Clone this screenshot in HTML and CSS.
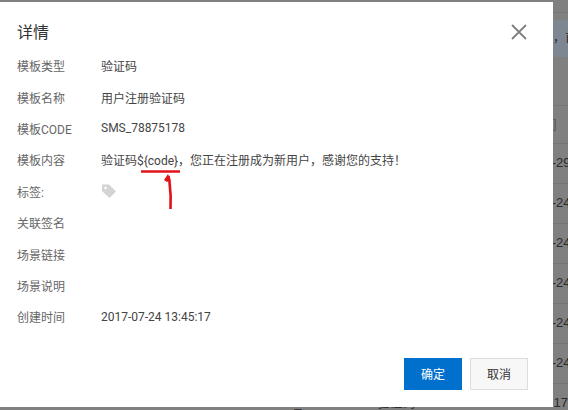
FILE: index.html
```html
<!DOCTYPE html>
<html lang="zh-CN">
<head>
    <meta charset="UTF-8">
    <title>详情</title>
    <link rel="stylesheet" href="styles.css">
</head>
<body>

<!-- Template table behind the dialog, only its right edge and bottom show -->
<div class="page">
    <div class="page-top"></div>
    <div class="page-notice">，首</div>
    <div class="page-filter"></div>
    <div class="page-head">]</div>
    <div class="page-row"><span class="cell-time">2017-07-29 10:21:33</span></div>
    <div class="page-row"><span class="cell-time">2017-07-24 13:45:17</span></div>
    <div class="page-row"><span class="cell-time">2017-07-24 13:45:17</span></div>
    <div class="page-row"><span class="cell-time">2017-07-24 13:45:17</span></div>
    <div class="page-row"><span class="cell-time">2017-07-24 13:45:17</span></div>
    <div class="page-row"><span class="cell-time">2017-07-24 13:45:17</span></div>
    <div class="page-row">
        <span class="cell-code">SMS_78875178</span>
        <span class="cell-type">验证码</span>
        <span class="cell-time last">2017-07-24 13:45:17</span>
    </div>
</div>

<!-- Detail dialog -->
<div class="dialog">
    <div class="dialog-head">
        <h1>详情</h1>
        <svg class="close" width="16" height="16" viewBox="0 0 16 16">
            <path d="M1 1L15 15M15 1L1 15" stroke="#808080" stroke-width="1.8" fill="none"/>
        </svg>
    </div>

    <div class="info-row"><span class="info-label">模板类型</span><span class="info-value">验证码</span></div>
    <div class="info-row"><span class="info-label">模板名称</span><span class="info-value">用户注册验证码</span></div>
    <div class="info-row"><span class="info-label">模板CODE</span><span class="info-value">SMS_78875178</span></div>
    <div class="info-row"><span class="info-label">模板内容</span><span class="info-value">验证码${code}，您正在注册成为新用户，感谢您的支持！</span></div>
    <div class="info-row">
        <span class="info-label">标签:</span>
        <span class="info-value">
            <svg class="tag" width="16" height="16" viewBox="0 0 16 16">
                <path d="M1 1.5H8L15 8.5L8.5 15L1 8Z" fill="#d4d4d4"/>
                <circle cx="4.5" cy="5" r="1.3" fill="#fff"/>
            </svg>
        </span>
    </div>
    <div class="info-row"><span class="info-label">关联签名</span></div>
    <div class="info-row"><span class="info-label">场景链接</span></div>
    <div class="info-row"><span class="info-label">场景说明</span></div>
    <div class="info-row"><span class="info-label">创建时间</span><span class="info-value">2017-07-24 13:45:17</span></div>

    <div class="dialog-foot">
        <button class="btn btn-primary">确定</button>
        <button class="btn">取消</button>
    </div>

    <!-- Hand-drawn red underline and arrow on the screenshot -->
    <svg class="scribble" width="60" height="60" viewBox="0 0 60 60">
        <path d="M0 1.5H39" stroke="#e0131a" stroke-width="2.5" fill="none"/>
        <path d="M29.5 39C30 30 29.5 20 28.5 12L27.5 6" stroke="#e0131a" stroke-width="2.6" fill="none"/>
        <path d="M27 4L23 10L26 12L29 10L30.5 12Z" fill="#e0131a"/>
    </svg>
</div>

</body>
</html>
```

FILE: styles.css
```css
html, body {
    margin: 0;
    height: 100%;
    overflow: hidden;
}
body {
    width: 568px;
    height: 410px;
    position: relative;
    background-color: #808080;
    font-family: Roboto, "Noto Sans CJK SC", sans-serif;
    font-size: 12px;
    color: #333;
}
.page {
    width: 568px;
    height: 410px;
    overflow: hidden;
    color: #2b2b2b;
    font-family: "Liberation Sans", "Noto Sans CJK SC", sans-serif;
    font-size: 13px;
    white-space: nowrap;
}
.page-top {
    height: 12px;
    border-bottom: 1px solid #767676;
}
.page-notice {
    height: 37px;
    margin-top: 7px;
    padding-left: 553px;
    line-height: 37px;
    font-size: 12px;
    background-color: #7c8792;
}
.page-filter {
    height: 48px;
    border-bottom: 1px solid #767676;
}
.page-head {
    height: 37px;
    padding-left: 553px;
    line-height: 36px;
    color: #555;
    border-bottom: 1px solid #747474;
}
.page-row {
    display: flex;
    height: 39px;
    line-height: 37px;
    border-bottom: 1px solid #747474;
}
.cell-time {
    margin-left: 504px;
}
.cell-code {
    margin-left: 266px;
    width: 145px;
}
.cell-type {
    width: 93px;
}
.cell-time.last {
    margin-left: 0;
}
.dialog {
    position: absolute;
    left: 0;
    top: 2px;
    width: 553px;
    height: 405px;
    background-color: #fff;
}
.dialog-head {
    display: flex;
    justify-content: space-between;
    align-items: flex-start;
    height: 48px;
    padding: 17px 17px 0;
    box-sizing: border-box;
}
.dialog-head h1 {
    margin: 0;
    font-size: 16px;
    font-weight: normal;
    color: #333;
}
.close {
    margin: 5px 9px 0 0;
}
.info-row {
    display: flex;
    align-items: center;
    height: 31.4px;
    padding-left: 17px;
}
.info-label {
    width: 84px;
    color: #666;
}
.info-value {
    color: #444;
    display: flex;
    align-items: center;
}
.tag {
    display: block;
}
.dialog-foot {
    display: flex;
    justify-content: flex-end;
    gap: 8px;
    padding: 25px 25px 0 0;
}
.btn {
    width: 58px;
    height: 32px;
    padding: 0;
    font-family: inherit;
    font-size: 12px;
    color: #333;
    background-color: #f7f7f7;
    border: 1px solid #ddd;
}
.btn-primary {
    color: #fff;
    background-color: #0070cc;
    border-color: #0070cc;
}
.scribble {
    position: absolute;
    left: 141px;
    top: 168px;
}
```
